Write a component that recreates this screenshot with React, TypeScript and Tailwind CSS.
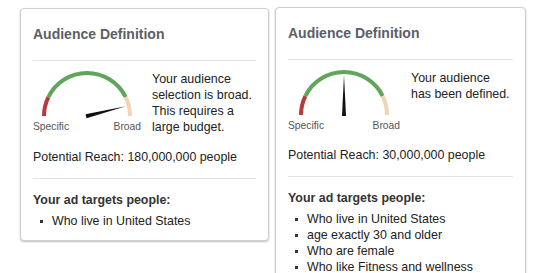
import React from "react";

type GaugeProps = { width: number; cx: number; angle: number };

// angle: degrees from the left end (0 = Specific, 180 = Broad)
function Gauge({ width, cx, angle }: GaugeProps) {
  const r = 43;
  const cy = 47;
  const pt = (deg: number) => {
    const a = (Math.PI * (180 - deg)) / 180;
    return [cx + r * Math.cos(a), cy - r * Math.sin(a)];
  };
  const arc = (from: number, to: number) => {
    const [x1, y1] = pt(from);
    const [x2, y2] = pt(to);
    return `M ${x1} ${y1} A ${r} ${r} 0 0 1 ${x2} ${y2}`;
  };
  const a = (Math.PI * (180 - angle)) / 180;
  const ux = Math.cos(a);
  const uy = -Math.sin(a);
  const tip = [cx + 40 * ux, cy + 40 * uy];
  const base = [cx - 1 * ux, cy - 1 * uy];
  const px = -uy;
  const py = ux;
  const needle = `${base[0] + 2 * px},${base[1] + 2 * py} ${tip[0]},${tip[1]} ${base[0] - 2 * px},${base[1] - 2 * py}`;

  return (
    <div className="flex shrink-0 flex-col" style={{ width }}>
      <svg width={width} height={51} viewBox={`0 0 ${width} 51`}>
        <path d={arc(0, 26)} fill="none" stroke="#b23d3b" strokeWidth={4} />
        <path d={arc(26, 154)} fill="none" stroke="#5fa65b" strokeWidth={4} />
        <path d={arc(154, 180)} fill="none" stroke="#f1d4b3" strokeWidth={4} />
        <polygon points={needle} fill="#111" />
      </svg>
      <div className="flex justify-between text-[10.3px] leading-[14px] text-[#555]">
        <span>Specific</span>
        <span>Broad</span>
      </div>
    </div>
  );
}

type CardProps = {
  gaugeWidth: number;
  cx: number;
  angle: number;
  message: string[];
  reach: string;
  targets: string[];
  className: string;
};

function AudienceCard({ gaugeWidth, cx, angle, message, reach, targets, className }: CardProps) {
  return (
    <div
      className={`shrink-0 rounded-[4px] border border-[#cfcfcf] bg-white px-3 pt-[15px] pb-[11px] shadow-[0_1px_2px_rgba(0,0,0,0.25)] ${className}`}
    >
      <h2 className="text-[14px] font-bold leading-5 text-[#5b5f66]">Audience Definition</h2>
      <div className="mt-4 border-t border-[#e3e3e3]" />
      <div className="mt-[8px] flex gap-[11px]">
        <Gauge width={gaugeWidth} cx={cx} angle={angle} />
        <div className="mt-[2px] whitespace-nowrap text-[12.4px] leading-4 text-[#222]">
          {message.map((m) => (
            <div key={m}>{m}</div>
          ))}
        </div>
      </div>
      <p className="mt-[14px] text-[12.4px] leading-4 text-[#222]">Potential Reach: {reach}</p>
      <div className="mt-[13px] border-t border-[#e3e3e3]" />
      <p className="mt-[13px] text-[12.4px] font-bold leading-4 text-[#333]">Your ad targets people:</p>
      <ul className="mt-[5px] text-[12.4px] leading-4 text-[#222]">
        {targets.map((t) => (
          <li key={t} className="flex items-center whitespace-nowrap">
            <span className="ml-[7px] mr-[9px] h-[3px] w-[3px] bg-[#333]" />
            {t}
          </li>
        ))}
      </ul>
    </div>
  );
}

export default function App() {
  return (
    <div
      className="flex h-[273px] w-[550px] items-start gap-[6px] overflow-hidden bg-white pl-[20px] pt-[7px]"
      style={{ fontFamily: '"Liberation Sans", Arial, sans-serif' }}
    >
      <AudienceCard
        className="mt-[1px] w-[249px]"
        gaugeWidth={108}
        cx={54}
        angle={166}
        message={["Your audience", "selection is broad.", "This requires a", "large budget."]}
        reach="180,000,000 people"
        targets={["Who live in United States"]}
      />
      <AudienceCard
        className="w-[251px]"
        gaugeWidth={112}
        cx={56}
        angle={90}
        message={["Your audience", "has been defined."]}
        reach="30,000,000 people"
        targets={[
          "Who live in United States",
          "age exactly 30 and older",
          "Who are female",
          "Who like Fitness and wellness",
        ]}
      />
    </div>
  );
}
